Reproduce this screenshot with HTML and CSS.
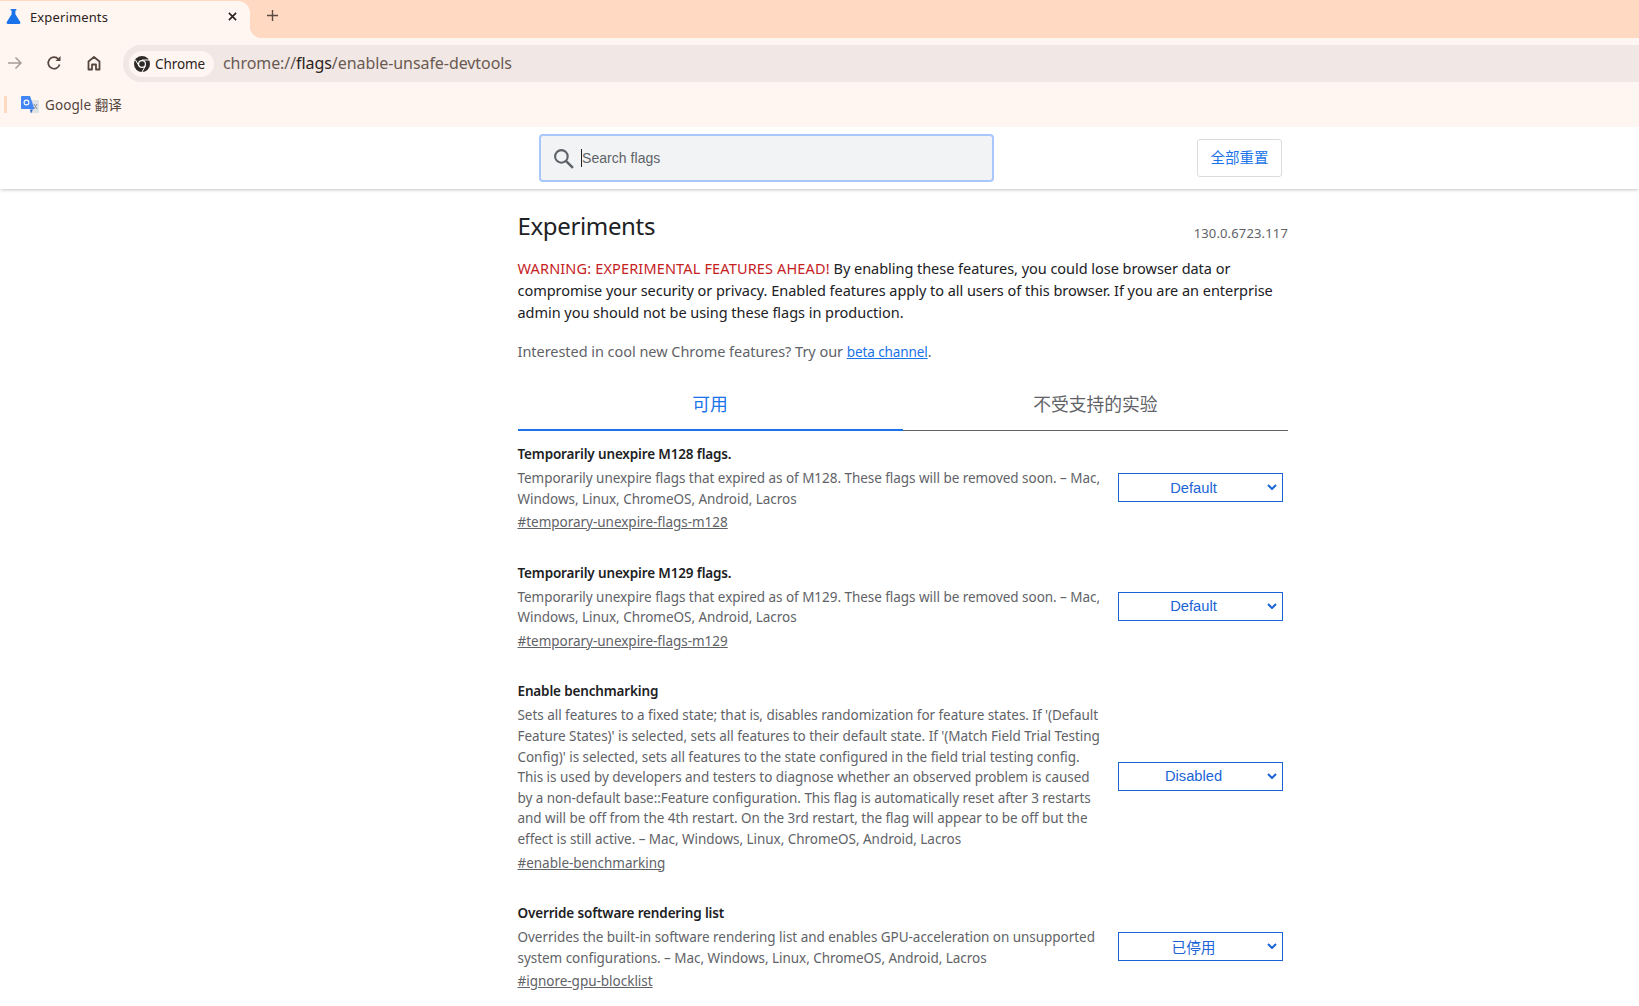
FILE: index.html
```html
<!DOCTYPE html>
<html lang="en">
<head>
<meta charset="utf-8">
<title>Experiments</title>
<link rel="stylesheet" href="styles.css">
</head>
<body>
<div class="chrome">
  <div class="tabstrip">
    <div class="tab">
      <svg class="flask" viewBox="0 0 16 16"><path fill="#1a73e8" d="M5 0h6v1.6H10v4l5.2 8.2c.5.9 0 2.2-1.2 2.2H2C.8 16 .3 14.700.8 13.800L6 5.600v-4H5z"/></svg>
      <span class="tab-title">Experiments</span>
      <svg class="tab-close" viewBox="0 0 10 10"><path d="M1 1l8 8M9 1l-8 8" stroke="#2b2320" stroke-width="1.800" fill="none"/></svg>
    </div>
    <div class="strip-rest">
      <svg class="newtab" viewBox="0 0 12 12"><path d="M6 0v12M0 6h12" stroke="#5a4a40" stroke-width="1.500" fill="none"/></svg>
    </div>
  </div>
  <div class="toolbar">
    <svg class="nav nav-forward" viewBox="0 0 16 16"><path d="M1 8h13M8.500 2.500L14 8l-5.500 5.500" stroke="#a89c96" stroke-width="1.500" fill="none"/></svg>
    <svg class="nav nav-reload" viewBox="0 0 16 16"><path d="M13.600 9.500A5.800 5.800 0 1 1 12.300 4" stroke="#55453c" stroke-width="1.700" fill="none"/><path d="M14.500 1v5h-5z" fill="#55453c"/></svg>
    <svg class="nav nav-home" viewBox="0 0 16 16"><path d="M2.500 14.500V6.500L8 2l5.500 4.500v8h-3.500v-5H6v5z" stroke="#55453c" stroke-width="1.800" fill="none" stroke-linejoin="round"/></svg>
    <div class="omnibox">
      <div class="chip">
        <svg class="chrome-logo" viewBox="0 0 16 16">
          <circle cx="8" cy="8" r="8" fill="#2e2a28"/>
          <circle cx="8" cy="8" r="4" fill="#fff"/>
          <circle cx="8" cy="8" r="2.800" fill="#2e2a28"/>
          <path d="M8 4h7M5 10L1.500 4M11.400 10L8 16" stroke="#fff" stroke-width="1" fill="none"/>
        </svg>
        <span>Chrome</span>
      </div>
      <div class="url">chrome://<b>flags</b>/enable-unsafe-devtools</div>
    </div>
  </div>
  <div class="bookmarks">
    <span class="bm-sep"></span>
    <svg class="translate" viewBox="0 0 18 18">
      <path fill="#dfe3e6" d="M7 4h10a1 1 0 0 1 1 1v11a1 1 0 0 1-1 1H9z"/>
      <path fill="#4285f4" d="M1 0h8l4.500 13H1a1 1 0 0 1-1-1V1a1 1 0 0 1 1-1z"/>
      <path fill="#3367c5" d="M9 13.500h3l-2 4z"/>
      <circle cx="5.500" cy="6.500" r="2.400" fill="none" stroke="#fff" stroke-width="1.100"/>
      <path d="M13 8l3 5M16 8l-3 5" stroke="#8a9197" stroke-width="1"/>
    </svg>
    <span class="bm-label">Google 翻译</span>
  </div>
</div>

<header class="flags-head">
  <div class="search">
    <svg class="search-icon" viewBox="0 0 20 20"><circle cx="8" cy="8" r="6" fill="none" stroke="#5f6368" stroke-width="2"/><path d="M12.500 12.500L19 19" stroke="#5f6368" stroke-width="2.400"/></svg>
    <span class="caret"></span>
    <span class="search-text">Search flags</span>
  </div>
  <button class="reset">全部重置</button>
</header>

<main class="content">
  <div class="title-row">
    <h1>Experiments</h1>
    <span class="version">130.0.6723.117</span>
  </div>
  <p class="warning"><span class="warn">WARNING: EXPERIMENTAL FEATURES AHEAD!</span> By enabling these features, you could lose browser data or compromise your security or privacy. Enabled features apply to all users of this browser. If you are an enterprise admin you should not be using these flags in production.</p>
  <p class="beta">Interested in cool new Chrome features? Try our <a href="#">beta channel</a>.</p>
  <div class="tabs">
    <div class="tab-item active">可用</div>
    <div class="tab-item">不受支持的实验</div>
  </div>

  <section class="exp exp-1">
    <div class="exp-text">
      <h2>Temporarily unexpire M128 flags.</h2>
      <p>Temporarily unexpire flags that expired as of M128. These flags will be removed soon. – Mac, Windows, Linux, ChromeOS, Android, Lacros</p>
      <a href="#">#temporary-unexpire-flags-m128</a>
    </div>
    <div class="select"><span>Default</span><svg viewBox="0 0 10 6"><path d="M1 1l4 4 4-4" stroke="#1a64d6" stroke-width="2" fill="none"/></svg></div>
  </section>

  <section class="exp exp-2">
    <div class="exp-text">
      <h2>Temporarily unexpire M129 flags.</h2>
      <p>Temporarily unexpire flags that expired as of M129. These flags will be removed soon. – Mac, Windows, Linux, ChromeOS, Android, Lacros</p>
      <a href="#">#temporary-unexpire-flags-m129</a>
    </div>
    <div class="select"><span>Default</span><svg viewBox="0 0 10 6"><path d="M1 1l4 4 4-4" stroke="#1a64d6" stroke-width="2" fill="none"/></svg></div>
  </section>

  <section class="exp exp-3">
    <div class="exp-text">
      <h2>Enable benchmarking</h2>
      <p>Sets all features to a fixed state; that is, disables randomization for feature states. If '(Default Feature States)' is selected, sets all features to their default state. If '(Match Field Trial Testing Config)' is selected, sets all features to the state configured in the field trial testing config. This is used by developers and testers to diagnose whether an observed problem is caused by a non-default base::Feature configuration. This flag is automatically reset after 3 restarts and will be off from the 4th restart. On the 3rd restart, the flag will appear to be off but the effect is still active. – Mac, Windows, Linux, ChromeOS, Android, Lacros</p>
      <a href="#">#enable-benchmarking</a>
    </div>
    <div class="select"><span>Disabled</span><svg viewBox="0 0 10 6"><path d="M1 1l4 4 4-4" stroke="#1a64d6" stroke-width="2" fill="none"/></svg></div>
  </section>

  <section class="exp exp-4">
    <div class="exp-text">
      <h2>Override software rendering list</h2>
      <p>Overrides the built-in software rendering list and enables GPU-acceleration on unsupported system configurations. – Mac, Windows, Linux, ChromeOS, Android, Lacros</p>
      <a href="#">#ignore-gpu-blocklist</a>
    </div>
    <div class="select"><span>已停用</span><svg viewBox="0 0 10 6"><path d="M1 1l4 4 4-4" stroke="#1a64d6" stroke-width="2" fill="none"/></svg></div>
  </section>
</main>
</body>
</html>
```
FILE: styles.css
```css
* { box-sizing: border-box; }
html, body { margin: 0; height: 100%; overflow: hidden; background: #fff; }
body { font-family: "Noto Sans", "Noto Sans CJK SC", sans-serif; color: #202124; }

.chrome { background: #fff6f2; height: 127px; }
.tabstrip { display: flex; height: 38px; background: #ffd9c2; }
.tab { width: 250px; margin-top: 1px; background: #fff6f2; border-radius: 0 12px 0 0; display: flex; align-items: center; position: relative; font-size: 13px; padding-bottom: 3px; }
.tab::after { content: ""; position: absolute; right: -12px; bottom: 0; width: 12px; height: 12px; background: radial-gradient(circle at 100% 0, transparent 12px, #fff6f2 12.500px); }
.flask { width: 15px; height: 15px; margin-left: 6px; margin-top: -4px; }
.tab-title { margin-left: 9px; flex: 1; color: #2b2320; letter-spacing: 0.130px; margin-top: -2px; }
.tab-close { width: 9px; height: 9px; margin-right: 13px; margin-top: -3px; }
.strip-rest { flex: 1; display: flex; align-items: center; }
.newtab { width: 11px; height: 11px; margin-left: 17px; margin-top: -7px; }

.toolbar { height: 51px; padding-top: 7px; display: flex; align-items: flex-start; }
.nav { width: 16px; height: 16px; margin-top: 10px; flex: none; }
.nav-forward { margin-left: 7px; }
.nav-reload { margin-left: 23px; }
.nav-home { margin-left: 24px; }
.omnibox { margin-left: 21px; flex: 1; height: 37px; background: #f1e8e5; border-radius: 18px 0 0 18px; display: flex; align-items: center; padding-left: 6px; }
.chip { width: 85px; height: 26px; background: #fff6f2; border-radius: 13px; display: flex; align-items: center; padding-left: 5px; gap: 5px; font-size: 13.500px; color: #2b2320; letter-spacing: -0.100px; }
.chrome-logo { width: 16px; height: 16px; }
.url { margin-left: 9px; font-size: 16px; color: #6a5a52; letter-spacing: -0.070px; margin-top: -1px; }
.url b { font-weight: 400; color: #2b2320; }

.bookmarks { height: 38px; display: flex; align-items: center; padding-bottom: 7px; }
.bm-sep { width: 3px; height: 17px; background: #ffd9c2; margin-left: 4px; }
.translate { width: 18px; height: 18px; margin-left: 14px; }
.bm-label { margin-left: 6px; margin-top: -2px; font-size: 13.500px; letter-spacing: 0.100px; color: #55453c; }

.flags-head { height: 62px; background: #fff; box-shadow: 0 2px 3px -1px rgba(60, 64, 67, .3); display: flex; align-items: center; padding-left: 539px; position: relative; }
.search { width: 455px; height: 48px; background: #f1f3f4; border: 2px solid #a8c7fa; border-radius: 4px; display: flex; align-items: center; padding-left: 12px; font-family: "Liberation Sans", sans-serif; font-size: 14px; letter-spacing: 0.050px; color: #5f6368; }
.search-icon { width: 21px; height: 21px; flex: none; }
.caret { width: 1px; height: 18px; background: #202124; margin-left: 7px; }
.reset { margin-left: 203px; width: 85px; height: 38px; background: #fff; border: 1px solid #dadce0; border-radius: 3px; font-family: "Noto Sans CJK SC", sans-serif; font-size: 14.500px; color: #1a73e8; padding: 0 0 3px; }

.content { width: 770.500px; margin-left: 517.500px; }
.title-row { display: flex; justify-content: space-between; height: 60px; padding-top: 17px; }
h1 { margin: 0; font-size: 24px; font-weight: 400; line-height: 40px; letter-spacing: -0.350px; }
.version { font-size: 13px; color: #5f6368; margin-top: 16px; letter-spacing: 0.150px; line-height: 22px; }
.warning { margin: 8px 0 0; font-size: 14.500px; line-height: 22px; letter-spacing: -0.036px; color: #202124; }
.warn { color: #c5221f; letter-spacing: 0.150px; }
.beta { margin: 17px 0 0; font-size: 14.500px; line-height: 22px; letter-spacing: -0.040px; color: #5f6368; }
.beta a { color: #1a73e8; font-size: 13.500px; letter-spacing: -0.100px; }

.tabs { display: grid; grid-template-columns: 1fr 1fr; margin-top: 20px; height: 48px; font-family: "Noto Sans CJK SC", sans-serif; font-size: 17.800px; }
.tab-item { text-align: center; color: #5f6368; border-bottom: 1px solid #5f6368; line-height: 40px; }
.tab-item.active { color: #1a73e8; border-bottom: 2px solid #1a73e8; }

.exp { display: flex; align-items: center; justify-content: space-between; padding-right: 5px; }
.exp-1 { margin-top: 12px; }
.exp-2, .exp-3, .exp-4 { margin-top: 29.500px; }
.exp-text { width: 586px; }
h2 { margin: 0; font-size: 13.500px; font-weight: 600; line-height: 22px; color: #202124; letter-spacing: -0.150px; }
.exp-text p { margin: 3px 0 0; font-size: 13.500px; line-height: 20.600px; color: #5f6368; letter-spacing: -0.040px; }
.exp-text a { display: inline-block; margin-top: 3px; font-size: 13.500px; line-height: 20px; color: #5f6368; letter-spacing: -0.020px; }

.select { width: 165px; height: 29px; border: 1.500px solid #1a64d6; display: flex; align-items: center; justify-content: center; padding-right: 14px; font-family: "Liberation Sans", "Noto Sans CJK SC", sans-serif; font-size: 14.700px; color: #1a64d6; position: relative; flex: none; }
.select svg { position: absolute; right: 5px; top: 10px; width: 10px; height: 6px; }
```
